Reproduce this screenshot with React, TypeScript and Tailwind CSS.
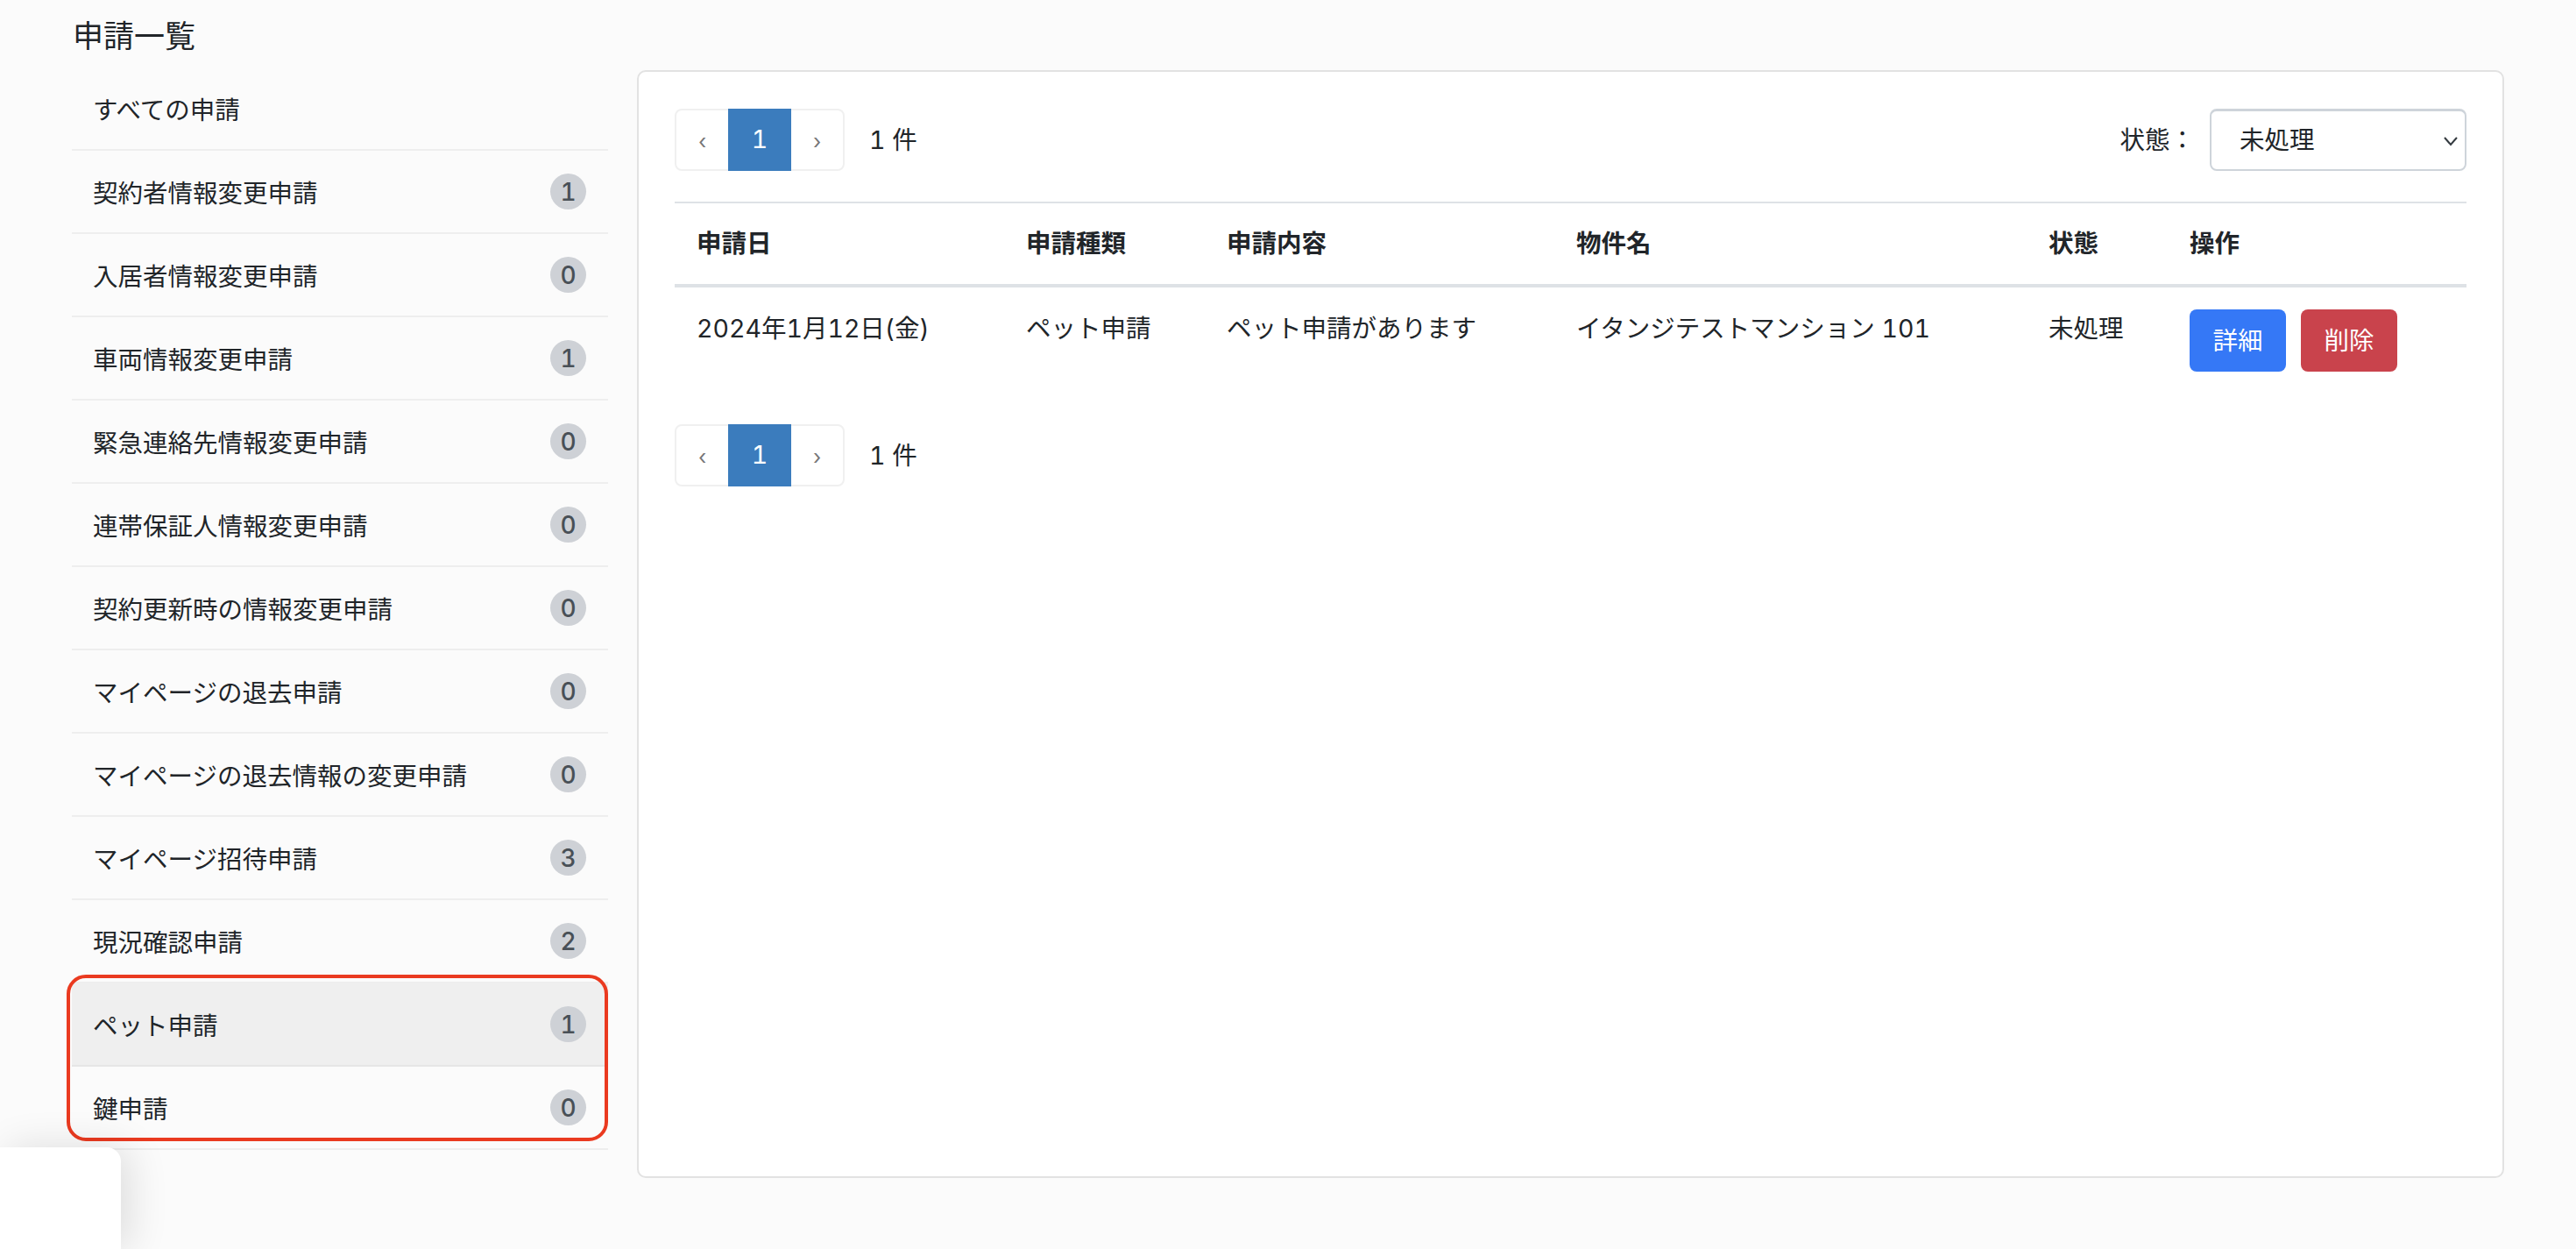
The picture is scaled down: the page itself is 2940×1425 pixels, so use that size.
const FONT = "font-['Inter','Noto_Sans_CJK_JP',sans-serif]";

const rows: { label: string; count?: number; active?: boolean }[] = [
  { label: "すべての申請" },
  { label: "契約者情報変更申請", count: 1 },
  { label: "入居者情報変更申請", count: 0 },
  { label: "車両情報変更申請", count: 1 },
  { label: "緊急連絡先情報変更申請", count: 0 },
  { label: "連帯保証人情報変更申請", count: 0 },
  { label: "契約更新時の情報変更申請", count: 0 },
  { label: "マイページの退去申請", count: 0 },
  { label: "マイページの退去情報の変更申請", count: 0 },
  { label: "マイページ招待申請", count: 3 },
  { label: "現況確認申請", count: 2 },
  { label: "ペット申請", count: 1, active: true },
  { label: "鍵申請", count: 0 },
];

function Pagination() {
  return (
    <div className="flex items-center">
      <div className="flex h-[71px] w-[194px] rounded-[8px] border-2 border-[#f0f0f0] bg-white">
        <span className="flex w-[59px] items-center justify-center pt-[4px] text-[24px] text-[#777777]">‹</span>
        <span className="-my-[2px] flex w-[72px] items-center justify-center bg-[#3b7cbd] text-[28.5px] tabular-nums text-white">1</span>
        <span className="flex w-[59px] items-center justify-center pt-[4px] text-[24px] text-[#777777]">›</span>
      </div>
      <span className="ml-[28px] whitespace-pre pt-[2px] text-[28.5px] tabular-nums text-[#212529]">1 件</span>
    </div>
  );
}

export default function App() {
  return (
    <div className={`${FONT} relative h-[1425px] w-full overflow-hidden bg-[#fbfbfb] text-[#212529]`}>
      <div className="flex h-[77px] items-start pl-[83px] pt-[16px] text-[35px] leading-[50px]">申請一覧</div>
      <div className="flex items-start pl-[82px] pr-[82px]">
        <ul className="w-[612px] shrink-0">
          {rows.map((r) => (
            <li
              key={r.label}
              className={`flex h-[95px] items-center justify-between border-b-2 pl-[24px] pr-[25px] text-[28.5px] ${r.active ? "border-[#e6e6e6] bg-[#efefef]" : "border-[#eeeeee]"}`}
            >
              <span className="pt-[6px]">{r.label}</span>
              {r.count !== undefined && (
                <span className="flex h-[41px] w-[41px] items-center justify-center rounded-full bg-[#ced1d6] text-[28px] font-medium tabular-nums text-[#495057]">
                  {r.count}
                </span>
              )}
            </li>
          ))}
        </ul>
        <main className="ml-[33px] mt-[3px] h-[1264px] flex-1 rounded-[10px] border-2 border-[#e2e2e2] bg-white pl-[41px] pr-[41px] pt-[42px]">
          <div className="flex h-[71px] items-center justify-between">
            <Pagination />
            <div className="flex items-center">
              <span className="mr-[17px] pt-[2px] text-[28.5px]">状態：</span>
              <div className="relative w-[293px]">
                <select className="h-[71px] w-full appearance-none rounded-[8px] border-2 border-t-[3px] border-[#ced4da] bg-white pl-[32px] text-[28.5px] text-[#212529] outline-none">
                  <option>未処理</option>
                </select>
                <svg className="absolute right-[10px] top-[31px] h-[12px] w-[16px]" viewBox="0 0 16 12" fill="none" stroke="#343a40" strokeWidth="2">
                  <path d="M1 2l7 8 7-8" />
                </svg>
              </div>
            </div>
          </div>
          <table className="mt-[35px] w-[2045px] table-fixed border-t-2 border-[#dee2e6] text-left text-[28.5px]">
            <colgroup>
              <col className="w-[376px]" />
              <col className="w-[229px]" />
              <col className="w-[399px]" />
              <col className="w-[539px]" />
              <col className="w-[161px]" />
              <col className="w-[341px]" />
            </colgroup>
            <thead>
              <tr className="border-b-4 border-[#dee2e6]">
                {["申請日", "申請種類", "申請内容", "物件名", "状態", "操作"].map((h) => (
                  <th key={h} className="px-[25px] py-[25px] align-middle font-bold leading-[42px]">
                    {h}
                  </th>
                ))}
              </tr>
            </thead>
            <tbody className="tabular-nums">
              <tr>
                <td className="p-[25px] pt-[26px] align-top leading-[42px]">2024年1月12日(金)</td>
                <td className="p-[25px] pt-[26px] align-top leading-[42px]">ペット申請</td>
                <td className="p-[25px] pt-[26px] align-top leading-[42px]">ペット申請があります</td>
                <td className="p-[25px] pt-[26px] align-top leading-[42px]">イタンジテストマンション 101</td>
                <td className="p-[25px] pt-[26px] align-top leading-[42px]">未処理</td>
                <td className="p-[25px] align-top">
                  <div className="flex gap-[17px]">
                    <button className="h-[71px] w-[110px] rounded-[8px] bg-[#3578f6] pt-[2px] text-[28.5px] text-white">詳細</button>
                    <button className="h-[71px] w-[110px] rounded-[8px] bg-[#c9434c] pt-[2px] text-[28.5px] text-white">削除</button>
                  </div>
                </td>
              </tr>
            </tbody>
          </table>
          <div className="mt-[35px]">
            <Pagination />
          </div>
        </main>
      </div>
      <div className="pointer-events-none absolute left-[76px] top-[1112px] h-[190px] w-[618px] rounded-[22px] border-[4px] border-[#ea3a20]" />
      <div className="absolute bottom-0 left-0 h-[116px] w-[138px] rounded-tr-[16px] bg-white shadow-[10px_0_45px_rgba(0,0,0,0.12)]" />
    </div>
  );
}
